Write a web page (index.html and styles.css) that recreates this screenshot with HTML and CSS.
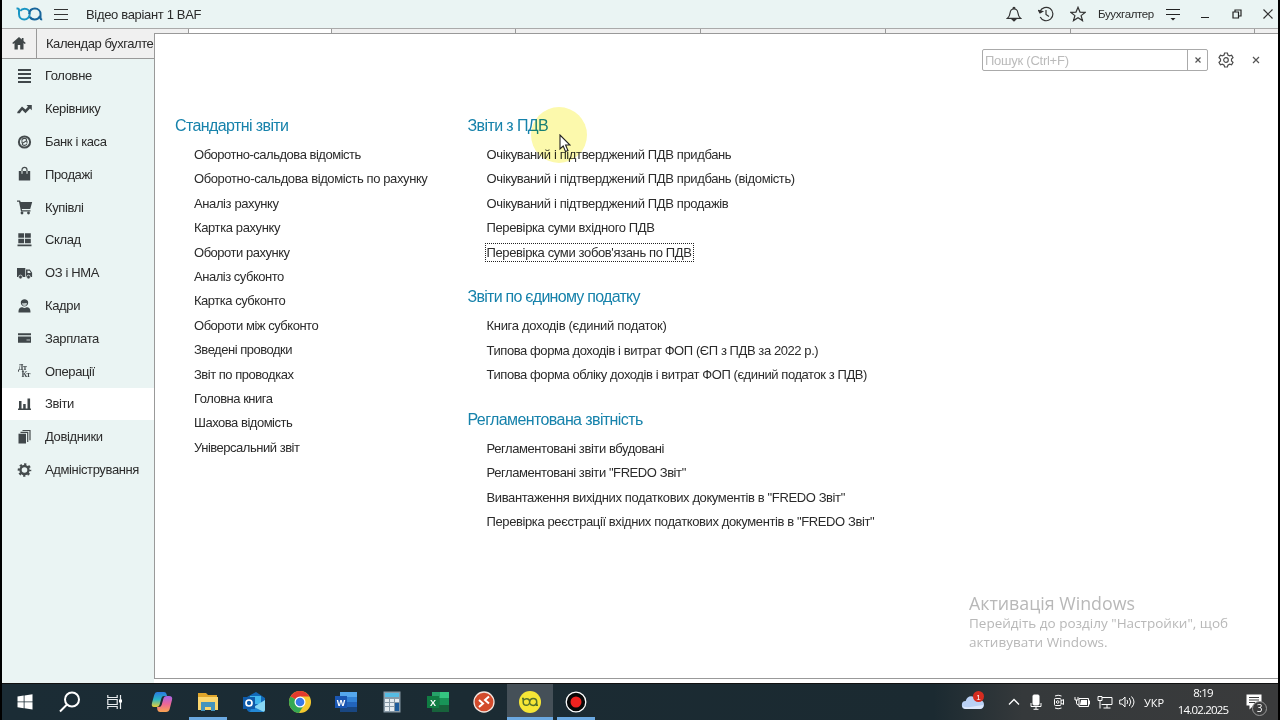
FILE: index.html
```html
<!DOCTYPE html>
<html lang="uk">
<head>
<meta charset="utf-8">
<title>Відео варіант 1 BAF</title>
<link rel="stylesheet" href="styles.css">
</head>
<body>
<div class="screen">
  <header class="titlebar">
    <svg class="logo" width="28" height="16" viewBox="0 0 28 16" fill="none" stroke-width="2"><path d="M.5 2.500h1q1.500 0 1.500 1.500V8c0 3.300 2.300 5.500 5.300 5.500s5.400-2.500 5.400-5.500-2-5.200-5-5.200c-2.200 0-3.700 1-4.500 2.200" stroke="#1a96c4"/><path d="M13.200 8c.3-3.200 2.500-5.500 5.700-5.500S24.500 4.900 24.500 8v4q0 1.500 1.700 1.500M24 10c-1 2.300-3 3.500-5.400 3.500-2.300 0-4-1-4.800-2.700" stroke="#17659b"/></svg>
    <svg class="burger" width="14" height="12" viewBox="0 0 14 12" stroke="#333" stroke-width="1"><path d="M0 .5h14M0 5.500h14M0 10.500h14"/></svg>
    <span class="title">Відео варіант 1 BAF</span>
    <div class="tools">
      <svg width="16" height="16" viewBox="0 0 16 16" fill="none" stroke="#333" stroke-width="1.200"><path d="M1.500 12.300h13c-2-1.500-2.300-3-2.600-5.500C11.600 4.300 10.300 3 8 3S4.400 4.300 4.100 6.800c-.3 2.500-.6 4-2.600 5.500zM7 2.800C7 1 9 1 9 2.800"/><path d="M6.500 13.500h3L8 15z" fill="#333"/></svg>
      <svg width="16" height="16" viewBox="0 0 16 16" fill="none" stroke="#333" stroke-width="1.200"><path d="M2 5.500A6.700 6.700 0 1 1 2.200 11M8 4v4.500l3 2"/><path d="M.5 4.500 2 7l2.500-1.500z" fill="#333"/></svg>
      <svg width="16" height="16" viewBox="0 0 16 16" fill="none" stroke="#333" stroke-width="1.200"><path d="m8 1.300 2 4.800 5.100.3-4 3.200 1.400 5L8 11.800l-4.500 2.800 1.400-5-4-3.200L6 6.100z"/></svg>
      <span class="user">Буухгалтер</span>
      <svg width="16" height="14" viewBox="0 0 16 14" stroke="#222" stroke-width="1.200"><path d="M1 2.500h14M1 7.500h14"/><path d="M5.500 11h5l-2.500 2.500z" fill="#222" stroke="none"/></svg>
      <svg width="10" height="10" viewBox="0 0 10 10" stroke="#222"><path d="M1 8.500h8"/></svg>
      <svg width="10" height="10" viewBox="0 0 10 10" fill="none" stroke="#222" stroke-width="1.200"><path d="M1 3h5.500v6H1zM3 3V1h6v6H6.500"/></svg>
      <svg width="10" height="10" viewBox="0 0 10 10" stroke="#333" stroke-width="1.200"><path d="m.5.500 9 9m0-9-9 9"/></svg>
    </div>
  </header>
  <div class="tabs">
    <div class="home"><svg width="14" height="13" viewBox="0 0 14 13" fill="#404648"><path d="M7 0 .2 6l1 1L2.500 6v6.500h3.300V8h2.400v4.500h3.300V6l1.300 1 1-1-2.300-2V1H9.800v1.400z"/></svg></div>
    <div class="tab first">Календар бухгалте</div>
    <div class="tab current"></div>
    <div class="tab short"></div><div class="tab"></div><div class="tab"></div><div class="tab"></div><div class="tab last"></div><div class="tab rest"></div>
  </div>
  <div class="work">
    <nav class="side">
      <a><svg viewBox="0 0 16 16"><path d="M1.500 1h13v2h-13zm0 4h13v2h-13zm0 4h13v2h-13zm0 4h13v2h-13z"/></svg><span>Головне</span></a>
      <a><svg viewBox="0 0 16 16"><path d="m.8 11 4.700-5.500L9 8.500l2.500-2.700L10 4h5.300v5.200L13.500 7.500 9 12.300 5.700 9 3.300 12.200H.8z"/></svg><span>Керівнику</span></a>
      <a><svg viewBox="0 0 16 16"><circle cx="8" cy="8" r="5.600" fill="none" stroke="#454b4d" stroke-width="2"/><path d="M5.300 6.800C5.500 3.800 10 3.800 10.200 6 10.400 8 5.800 8 5.800 10c0 1.800 4.200 2 4.700-.5M4.500 8h2m3 0h2" fill="none" stroke="#454b4d" stroke-width="1.200"/></svg><span>Банк і каса</span></a>
      <a><svg viewBox="0 0 16 16"><path d="M2.300 5h11.400v9.500H2.300z"/><path d="M5.500 8V4c0-3.500 5-3.500 5 0v4" fill="none" stroke="#454b4d" stroke-width="1.200"/><path d="M5.500 5v2.800m5-2.800v2.800" stroke="#e9f2f1"/></svg><span>Продажі</span></a>
      <a><svg viewBox="0 0 16 16"><path d="M.5 1.500h3l.7 1.500h11.500l-2 7H5.300l.3 1.200H14v1.300H4.500L2.500 2.700h-2z"/><circle cx="5.500" cy="14" r="1.400"/><circle cx="12" cy="14" r="1.400"/></svg><span>Купівлі</span></a>
      <a><svg viewBox="0 0 16 16"><path d="M1.800 1.300h5.800v4.500H1.800zm6.700 0h5.800v4.500H8.500zM1.800 6.700h5.800v4.500H1.800zm6.700 0h5.800v4.500H8.500zM1 12.500h14v1.700H1z"/></svg><span>Склад</span></a>
      <a><svg viewBox="0 0 16 16"><path d="M.5 3h8.300v9H.5zM9.500 4.500h3.800l2.300 3.300V12H9.500z"/><path d="M11 5.800h2L14.300 8H11z" fill="#e9f2f1"/><circle cx="4" cy="12" r="1.900" stroke="#e9f2f1" stroke-width=".7"/><circle cx="12" cy="12" r="1.900" stroke="#e9f2f1" stroke-width=".7"/></svg><span>ОЗ і НМА</span></a>
      <a><svg viewBox="0 0 16 16"><path d="M4.300 5C3.800 0 12.200 0 11.700 5 11.200 9.500 4.800 9.500 4.300 5zM2 14.500c0-4.300 1.500-5 4-5.200 1.500.8 2.500.8 4 0 2.500.2 4 .9 4 5.200z"/><path d="M5.500 5c2 .5 3 0 5 0-.3 2-.8 3-2.500 3S5.700 7 5.500 5z" fill="#bcc5c5"/></svg><span>Кадри</span></a>
      <a><svg viewBox="0 0 16 16"><path d="M1.500 3.300h13v2h-13zm0 3.200h13v6.200h-13z"/><path d="M10 9.500h3.500v1H10z" fill="#bcc5c5"/></svg><span>Зарплата</span></a>
      <a><svg viewBox="0 0 16 16"><text x="1.500" y="7" class="dk">Дт</text><text x="5" y="14" class="dk">Кт</text></svg><span>Операції</span></a>
      <a class="on"><svg viewBox="0 0 16 16"><path d="M1.500 12.500h13V14h-13zM2.500 5h2.500v7.500H2.500zm4.200 3h2.500v4.500H6.700zM11 2.500h2.600v10H11z"/></svg><span>Звіти</span></a>
      <a><svg viewBox="0 0 16 16"><path d="M2 4.700h7.500v9.800H2z"/><path d="M4 3.300h7.200V13M6 1.500h7.500v9.800" fill="none" stroke="#454b4d" stroke-width="1.200"/></svg><span>Довідники</span></a>
      <a><svg viewBox="0 0 16 16"><circle cx="8" cy="8" r="4" fill="none" stroke="#454b4d" stroke-width="2.400"/><circle cx="8" cy="8" r="5.700" fill="none" stroke="#454b4d" stroke-width="2.200" stroke-dasharray="2.240 2.240" stroke-dashoffset="1.100"/></svg><span>Адміністрування</span></a>
    </nav>
    <main class="panel">
      <div class="searchrow">
        <div class="search"><span>Пошук (Ctrl+F)</span><b><svg width="6" height="6" viewBox="0 0 6 6" stroke="#555" stroke-width="1.200"><path d="m.5.500 5 5m0-5-5 5"/></svg></b></div>
        <svg class="gear" width="16" height="16" viewBox="0 0 16 16" fill="none" stroke="#4c4c4c" stroke-width="1.200"><path d="M6.600 1h2.800l.5 2 1.700.9 2-.7L15 5.700 13.500 7v2l1.500 1.400-1.400 2.400-2-.6-1.700 1L9.400 15H6.600l-.5-1.900-1.700-.9-2 .6L1 10.400 2.500 9V7L1 5.700l1.400-2.500 2 .7L6.100 3z"/><circle cx="8" cy="8" r="2.300"/></svg>
        <svg width="8" height="8" viewBox="0 0 8 8" stroke="#555" stroke-width="1.200"><path d="m1 1 6 6m0-6-6 6"/></svg>
      </div>
      <div class="cols">
        <section class="group left">
          <h2>Стандартні звіти</h2>
          <a>Оборотно-сальдова відомість</a><a class="wide">Оборотно-сальдова відомість по рахунку</a><a class="wide">Аналіз рахунку</a><a class="wide">Картка рахунку</a><a>Обороти рахунку</a><a>Аналіз субконто</a><a>Картка субконто</a><a>Обороти між субконто</a><a>Зведені проводки</a><a>Звіт по проводках</a><a>Головна книга</a><a>Шахова відомість</a><a>Універсальний звіт</a>
        </section>
        <div>
          <section class="group">
            <h2>Звіти з ПДВ</h2>
            <a>Очікуваний і підтверджений ПДВ придбань</a><a>Очікуваний і підтверджений ПДВ придбань (відомість)</a><a>Очікуваний і підтверджений ПДВ продажів</a><a>Перевірка суми вхідного ПДВ</a><a class="focus">Перевірка суми зобов'язань по ПДВ</a>
          </section>
          <section class="group">
            <h2 class="tight">Звіти по єдиному податку</h2>
            <a class="loose">Книга доходів (єдиний податок)</a><a class="narrow">Типова форма доходів і витрат ФОП (ЄП з ПДВ за 2022 р.)</a><a class="narrow">Типова форма обліку доходів і витрат ФОП (єдиний податок з ПДВ)</a>
          </section>
          <section class="group">
            <h2>Регламентована звітність</h2>
            <a class="narrow">Регламентовані звіти вбудовані</a><a class="narrow">Регламентовані звіти "FREDO Звіт"</a><a class="mid">Вивантаження вихідних податкових документів в "FREDO Звіт"</a><a class="mid">Перевірка реєстрації вхідних податкових документів в "FREDO Звіт"</a>
          </section>
        </div>
      </div>
    </main>
  </div>
  <footer class="taskbar">
    <div class="apps">
      <i class="sys"><svg width="16" height="16" viewBox="0 0 16 16" fill="#fff"><path d="M.5 2.500 6.700 1.600v5.900H.5zM7.500 1.500 15.500.3v7.200h-8zM.5 8.300h6.200v5.900l-6.200-.9zm7 0h8v7.200l-8-1.200z"/></svg></i>
      <i class="sys"><svg width="22" height="22" viewBox="0 0 22 22" fill="none" stroke="#fff" stroke-width="2"><circle cx="13" cy="8.500" r="7"/><path d="m8 13.500-7 7"/></svg></i>
      <i class="sys"><svg width="16" height="16" viewBox="0 0 16 16" fill="none" stroke="#e8ecee" stroke-width="1.200"><path d="M.8 1v2.500h9.400V1M.8 5.500h9.400v5H.8zM.8 15v-2.500h9.400V15M13.500 1v14"/><path d="M12 5.500h3v3h-3z" fill="#fff" stroke="none"/></svg></i>
      <i class="gap"></i>
      <i><svg width="22" height="22" viewBox="0 0 22 22"><defs><linearGradient id="c1" x2="0" y2="1"><stop stop-color="#2878e0"/><stop offset=".5" stop-color="#2bb6c5"/><stop offset="1" stop-color="#e9cf35"/></linearGradient><linearGradient id="c2" x2="0" y2="1"><stop stop-color="#a764e8"/><stop offset=".5" stop-color="#ee6696"/><stop offset="1" stop-color="#f9a550"/></linearGradient></defs><path d="M6 1h7q2 0 2.500 2l.5 2h-3q-2 0-2.500 2l-2 7q-.6 2-3 2H3q-3 0-2-4l2.200-8Q4 1 6 1z" fill="url(#c1)"/><path d="M16 5h2q4 0 3 4l-2.300 9q-.7 3-3.700 3H9q-2 0-2.600-2L6 16h2q2 0 2.600-2l2-7q.5-2 3.400-2z" fill="url(#c2)"/></svg></i>
      <i class="run"><svg width="22" height="20" viewBox="0 0 22 20"><path d="M1 1h8l2 2h9v4H1z" fill="#dfa52b"/><path d="M1 5h20v13H1z" fill="#fbd66e"/><path d="M4 10h14v9h-4v-4H8v4H4z" fill="#4494bd"/></svg></i>
      <i><svg width="24" height="22" viewBox="0 0 24 22"><path d="m5 6 9-5 9 6v12l-2 2H7l-2-2z" fill="#1269b8"/><path d="M8 5h11v8H8z" fill="#41b7ee"/><path d="m23 9-13 8v4h11q2 0 2-2z" fill="#88d8f5"/><path d="m10 15 12 6H8z" fill="#2389d6"/><path d="M1 6h12v12H1z" fill="#0f5baa"/><circle cx="7" cy="12" r="3" fill="none" stroke="#fff" stroke-width="1.700"/></svg></i>
      <i><svg width="24" height="24" viewBox="0 0 24 24"><circle cx="12" cy="12" r="11" fill="#f5c92f"/><path d="M12 12 2.500 6.500A11 11 0 0 1 21.500 6.500H12z" fill="#e33b2e"/><path d="M2.500 6.500A11 11 0 0 0 11 23l5-8-4-3z" fill="#35a853"/><circle cx="12" cy="12" r="5.500" fill="#fff"/><circle cx="12" cy="12" r="4.300" fill="#3879e8"/></svg></i>
      <i><svg width="24" height="22" viewBox="0 0 24 22"><path d="M6 1h17v5H6z" fill="#54a7ed"/><path d="M6 6h17v5H6z" fill="#3383d6"/><path d="M6 11h17v5H6z" fill="#2264bb"/><path d="M6 16h17v5H6z" fill="#194782"/><path d="M1 5h12v12H1z" fill="#1a56b2"/><text x="7" y="14.500" class="letter">W</text></svg></i>
      <i><svg width="18" height="22" viewBox="0 0 18 22"><path d="M.5.500h17v21H.5z" fill="#889aa7"/><path d="M2 2h14v4H2z" fill="#56bce3"/><path d="M2 8h4v3H2zm5 0h4v3H7zm5 0h4v3h-4zM2 12h4v3H2zm5 0h4v3H7zM2 16h4v4H2zm5 0h4v4H7z" fill="#e5edf1"/><path d="M12 12h4v8h-4z" fill="#1e5d9c"/></svg></i>
      <i><svg width="24" height="22" viewBox="0 0 24 22"><path d="M6 1h17v20H6z" fill="#1b7c48"/><path d="M14 1h9v6h-9z" fill="#34c481"/><path d="M6 1h8v6H6z" fill="#26a269"/><path d="M14 7h9v7h-9z" fill="#189458"/><path d="M6 14h17v7H6z" fill="#17623b"/><path d="M1 5h12v12H1z" fill="#107c43"/><text x="7" y="14.500" class="letter">X</text></svg></i>
      <i><svg width="22" height="22" viewBox="0 0 22 22"><circle cx="11" cy="11" r="10" fill="#d34b2c" stroke="#f5e5df" stroke-width="1.300"/><path d="m6 9 4 3.500L6 16M16 5.500 12 9l4 3.500" fill="none" stroke="#fff" stroke-width="2"/></svg></i>
      <i class="run active"><svg width="24" height="24" viewBox="0 0 24 24"><circle cx="12" cy="12" r="11" fill="#f6e636"/><path d="M4 8.500h1.200V12c0 2 1.500 3.300 3.200 3.300s3.300-1.500 3.300-3.300-1.300-3.300-3.200-3.300c-1.200 0-2 .5-2.600 1.300M11.700 12c.2-2 1.500-3.400 3.500-3.400s3.500 1.400 3.500 3.400v3.200h1.300M18.500 13c-1 3.300-5.600 3-6.600.5" fill="none" stroke="#55702b" stroke-width="1.500"/></svg></i>
      <i class="run"><svg width="22" height="22" viewBox="0 0 22 22"><circle cx="11" cy="11" r="9.800" fill="#080808" stroke="#fff" stroke-width="1.300"/><circle cx="11" cy="11" r="5.500" fill="#f0221f"/></svg></i>
    </div>
    <div class="tray">
      <i><svg width="24" height="22" viewBox="0 0 24 22"><path d="M5 18a4 4 0 0 1-.3-8C6 4 13 3.500 15 9c5-1 8 1 8 4.500 0 3-2 4.500-4 4.500z" fill="#b9d1f5"/><path d="M1.500 15q3 2 8 1t13-2c-.3 2.500-2 4-4 4H5q-2.500 0-3.500-3z" fill="#dde9fc"/><circle cx="17.500" cy="5.500" r="5.500" fill="#d52c20"/><text x="17.500" y="8.500" class="one">1</text></svg></i>
      <i></i>
      <i><svg width="12" height="8" viewBox="0 0 12 8" fill="none" stroke="#fff" stroke-width="1.300"><path d="m1 6.500 5-5 5 5"/></svg></i>
      <i><svg width="12" height="16" viewBox="0 0 12 16" fill="none" stroke="#fff"><rect x="3" y="1" width="6" height="10" rx="1" fill="#fff"/><path d="M1 9v3.500h10V9M6 12.500V15M3.500 15.300h5"/></svg></i>
      <i><svg width="12" height="16" viewBox="0 0 12 16" fill="none" stroke="#fff"><rect x="1.500" y="4.500" width="6.500" height="7" rx="1"/><circle cx="4.700" cy="8" r="1.300"/><path d="m8 7 2.500-1.500v5L8 9M2 2q3-1.500 6.500 0M2 14q3 1.500 6.500 0"/></svg></i>
      <i><svg width="16" height="12" viewBox="0 0 16 12" fill="none" stroke="#fff"><path d="M5 2.500h9.500v8H5zM15.500 4.500v4M1 1v3h3V1M2.500 4v3q0 2 2.500 2"/><path d="M7 4h6v5H6z" fill="#fff" stroke="none"/></svg></i>
      <i><svg width="16" height="14" viewBox="0 0 16 14" fill="none" stroke="#fff"><path d="M5 2.500h10v7H4.500M10 9.500V13M6.500 13h7M1 1.500h4v4H1zM3 5.500v8"/></svg></i>
      <i><svg width="16" height="14" viewBox="0 0 16 14" fill="none" stroke="#fff"><path d="M.7 5h2.500L6 2v10L3.200 9H.7zM8 5q1.500 2 0 4M10.300 3q3 4 0 8M12.500 1.500q5 5.500 0 11"/></svg></i>
      <i class="lang">УКР</i>
      <i class="clock"><span>8:19</span><span>14.02.2025</span></i>
      <i class="notes"><svg width="16" height="16" viewBox="0 0 16 16"><path d="M.5.500h15v11h-8l-4 4v-4h-3z" fill="#fff"/><path d="M3 3.500h10M3 6h10M3 8.500h6" stroke="#3b3c3d" stroke-width="1.200"/></svg><b class="count">3</b></i>
    </div>
  </footer>
  <div class="watermark"><strong>Активація Windows</strong><span>Перейдіть до розділу "Настройки", щоб</span><span>активувати Windows.</span></div>
  <div class="halo"></div>
  <svg class="cursor" width="12" height="19" viewBox="0 0 12 19"><path d="M1 1v14l3.200-3 2.300 5.500 2.400-1L6.600 11H11z" fill="#fff" stroke="#222" stroke-width="1.100"/></svg>
</div>
</body>
</html>
```
FILE: styles.css
```css
* { box-sizing: border-box; }
body { margin: 0; background: #000; font-family: "Liberation Sans", Arial, sans-serif; color: #2b2b2b; }
svg { display: block; flex: none; }
.screen { position: relative; width: 1280px; height: 720px; overflow: hidden; padding: 0 2px; background: #000; display: flex; flex-direction: column; }
.titlebar { height: 28px; background: #eaf4f3; display: flex; align-items: center; padding-left: 14px; flex: none; }
.burger { margin-left: 10px; margin-top: 2px; }
.title { margin-left: 18px; font-size: 13px; letter-spacing: -.33px; white-space: nowrap; }
.tools { margin-left: auto; display: flex; align-items: center; padding-right: 5px; gap: 16px; }
.user { font-size: 11.5px; letter-spacing: -.37px; margin-left: -4px; margin-right: -4px; width: 55px; white-space: nowrap; }
.tools svg:nth-of-type(4) { margin-right: 3px; }
.tools svg:nth-of-type(5) { margin-right: 6px; }
.tools svg:nth-of-type(6) { margin-right: 5px; }
.tabs { height: 31px; flex: none; display: flex; background: #f0f0f0; border-top: 1px solid #aaa; border-bottom: 1px solid #999; }
.home { width: 35px; border-right: 1px solid #999; display: flex; align-items: center; justify-content: center; }
.tab { width: 185px; border-right: 1px solid #999; }
.tab.first { width: 152px; padding-left: 9px; font-size: 13px; letter-spacing: -.45px; line-height: 29px; white-space: nowrap; }
.tab.current { width: 143px; background: #fff; }
.tab.short { width: 184px; }
.tab.last { width: 184px; }
.tab.rest { flex: 1; width: auto; border: 0; }
.work { height: 624px; flex: none; display: flex; background: #fff; }
.side { width: 152px; background: #eaf4f3; padding-top: .6px; }
.side a { display: flex; align-items: center; height: 32.8px; padding-left: 14px; gap: 12px; font-size: 13px; letter-spacing: -.37px; white-space: nowrap; }
.side svg { width: 17px; height: 16px; fill: #40474a; }
.side .on { background: #fff; }
.dk { font: bold 8px "Liberation Serif", serif; letter-spacing: -.5px; }
.panel { position: relative; width: 1124px; height: 646px; margin-top: -26px; background: #fff; border: 1px solid #999; border-right: 0; }
.searchrow { display: flex; align-items: center; justify-content: flex-end; padding: 14px 18px 0 0; height: 37px; }
.search { width: 226px; height: 22px; border: 1px solid #aaa; border-radius: 2px; display: flex; font-size: 13px; letter-spacing: -.25px; line-height: 21px; color: #bbb; padding-left: 2px; }
.search b { width: 20px; margin-left: auto; border-left: 1px solid #aaa; display: flex; align-items: center; justify-content: center; }
.gear { margin: 0 18px 0 10px; }
.cols { display: grid; grid-template-columns: 292.5px 1fr; padding: 42px 0 0 20px; }
.group { margin-bottom: 19.4px; white-space: nowrap; }
.group h2 { margin: 0; height: 30px; line-height: 26px; font-size: 16px; letter-spacing: -.6px; font-weight: normal; color: #1682ab; }
.group h2.tight { letter-spacing: -.73px; }
.group a { display: block; width: max-content; height: 24.4px; line-height: 24.4px; margin-left: 19px; font-size: 13px; letter-spacing: -.365px; }
.left a { letter-spacing: -.48px; }
.left .wide { letter-spacing: -.39px; }
.group .loose { letter-spacing: -.3px; }
.group .narrow { letter-spacing: -.42px; }
.group .mid { letter-spacing: -.385px; }
.focus { position: relative; }
.focus::after { content: ""; position: absolute; inset: 2px -2px 3.4px -2px; border: 1px dotted #222; }
.taskbar { height: 37px; flex: none; display: flex; justify-content: space-between; background: linear-gradient(90deg, #1b2c35, #1b2a31 73%, #35393b 80%, #3a3b3c); border-top: 1px solid #111; }
.taskbar i { font-style: normal; display: flex; align-items: center; justify-content: center; }
.apps { display: flex; }
.apps i { width: 46px; position: relative; }
.apps .sys { width: 45px; }
.apps .gap { width: 2px; }
.apps .active { background: #455058; }
.run::after { content: ""; position: absolute; left: 4px; right: 4px; bottom: 0; height: 3px; background: #6ba9e2; }
.active::after { left: 0; right: 0; }
.letter { font: bold 9px "Liberation Sans", sans-serif; fill: #fff; text-anchor: middle; }
.one { font: 8px "Liberation Sans", sans-serif; fill: #fff; text-anchor: middle; }
.tray { display: grid; grid-template-columns: 26px 17px 22px 22px 23px 23px 23px 22px 32px 66px 42px; color: #fff; }
.lang { font: 11px "Open Sans", sans-serif; }
.tray .clock { flex-direction: column; font: 11.500px/17px "Open Sans", sans-serif; letter-spacing: -.8px; padding-bottom: 2px; }
.tray .notes { position: relative; padding-right: 7px; }
.count { position: absolute; left: 16px; top: 17px; width: 15px; height: 15px; border-radius: 50%; border: 1px solid #999; background: #3b3c3d; font: 10px/13px "Open Sans", sans-serif; text-align: center; }
.watermark { position: absolute; left: 969px; top: 592px; display: flex; flex-direction: column; font-family: "Open Sans", sans-serif; font-size: 13.5px; line-height: 19px; color: #b8b8b8; white-space: nowrap; }
.watermark strong { font-size: 17.8px; line-height: 22px; font-weight: normal; }
.halo { position: absolute; left: 531px; top: 107px; width: 56px; height: 56px; border-radius: 50%; background: #fcf9ac; mix-blend-mode: multiply; }
.cursor { position: absolute; left: 559px; top: 134px; }
```
